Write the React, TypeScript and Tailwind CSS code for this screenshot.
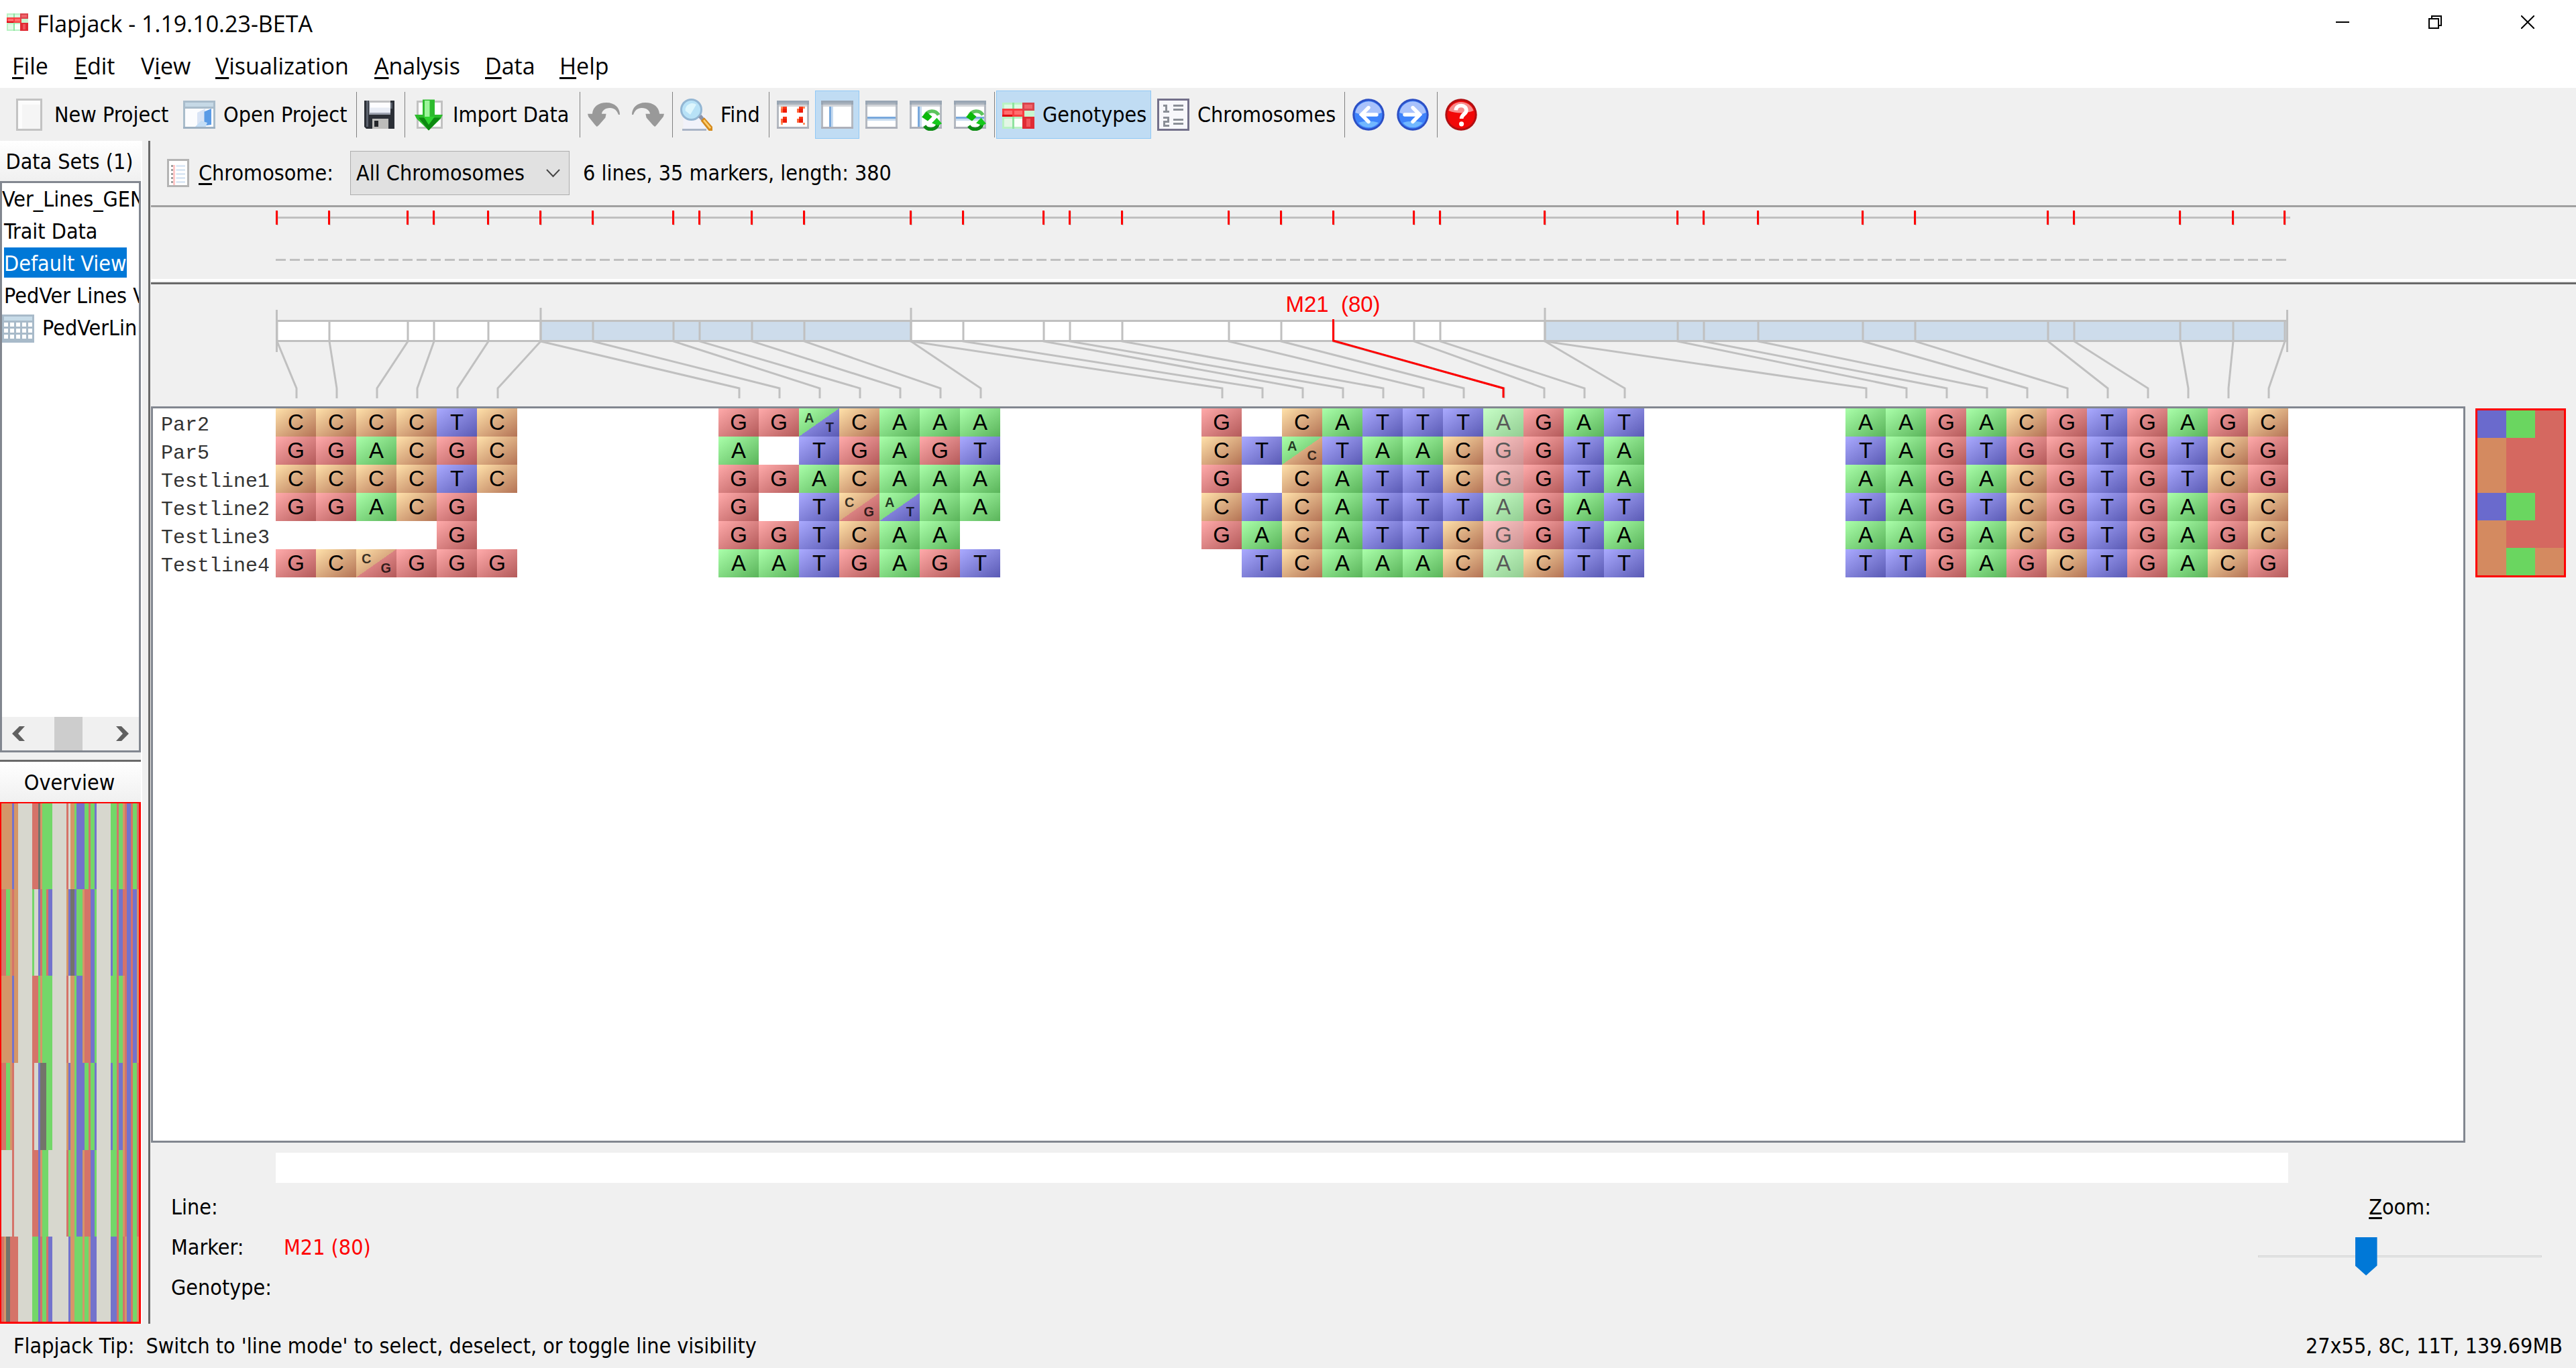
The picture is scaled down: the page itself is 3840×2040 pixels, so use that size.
/**
 * Flapjack main window: toolbar, data set tree, chromosome maps and the
 * genotype matrix.
 */
import { useState } from 'react'

// '-' is missing data, two letters are a heterozygous call
const CHROMOSOMES = [
  {
    ticks: [412, 490, 607, 646, 727, 805],
    rows: ['C C C C T C', 'G G A C G C', 'C C C C T C', 'G G A C G -', '- - - - G -', 'G C CG G G G'],
  },
  {
    ticks: [805, 883, 1003, 1042, 1120, 1198, 1357],
    rows: [
      'G G AT C A A A',
      'A - T G A G T',
      'G G A C A A A',
      'G - T CG AT A A',
      'G G T C A A -',
      'A A T G A G T',
    ],
  },
  {
    ticks: [1357, 1435, 1555, 1594, 1672, 1831, 1909, 1987, 2107, 2146, 2302],
    rows: [
      'G - C A T T T A G A T',
      'C T AC T A A C G G T A',
      'G - C A T T C G G T A',
      'C T C A T T T A G A T',
      'G A C A T T C G G T A',
      '- T C A A A C A C T T',
    ],
  },
  {
    ticks: [2302, 2500, 2539, 2620, 2776, 2854, 3052, 3091, 3249, 3328, 3405],
    rows: [
      'A A G A C G T G A G C',
      'T A G T G G T G T C G',
      'A A G A C G T G T C G',
      'T A G T C G T G A G C',
      'A A G A C G T G A G C',
      'T T G A G C T G A C G',
    ],
  },
]

const LINES = ['Par2', 'Par5', 'Testline1', 'Testline2', 'Testline3', 'Testline4']
const MAP_X = 411
const CELL = 60
const SELECTED = { chromosome: 2, marker: 7 }
const MAP_W = 3000

// first column of each chromosome in the matrix
const STARTS = [0, 11, 23, 39]

const CELL_BG: Record<string, string> = {
  A: 'bg-linear-to-br/srgb from-[#aaffaa] to-[#5ab45a]',
  C: 'bg-linear-to-br/srgb from-[#ffe1aa] to-[#b47355]',
  G: 'bg-linear-to-br/srgb from-[#ffaaaa] to-[#b45a5a]',
  T: 'bg-linear-to-br/srgb from-[#aaaaff] to-[#5a5ab4]',
  AT: 'bg-[linear-gradient(to_bottom_right,#aaffaa,#82da82_50%,#8282da_50%,#5a5ab4)]',
  CG: 'bg-[linear-gradient(to_bottom_right,#ffe1aa,#daaa80_50%,#da8282_50%,#b45a5a)]',
  AC: 'bg-[linear-gradient(to_bottom_right,#aaffaa,#82da82_50%,#daaa80_50%,#b47355)]',
}

const OVERVIEW_FILL: Record<string, string> = { A: '#73d769', C: '#d59668', G: '#d57369', T: '#7373cc' }
const MINI_BG: Record<string, string> = { A: 'bg-[#6ad660]', C: 'bg-[#d48a60]', G: 'bg-[#d56860]', T: 'bg-[#6a6acd]' }
const MINI_ROWS = ['TAG', 'CGG', 'CGG', 'TAG', 'CGG', 'CAC']

function Mnemonic({ text, at = 0 }: { text: string; at?: number }) {
  return (
    <span>
      {text.slice(0, at)}
      <u className="decoration-[3px] underline-offset-4 [text-decoration-skip-ink:none]">{text[at]}</u>
      {text.slice(at + 1)}
    </span>
  )
}

/* ---------- icons, all drawn on a 16 unit grid ---------- */

function Icon({ children }: { children: React.ReactNode }) {
  return (
    <svg viewBox="0 0 16 16" className="size-12 shrink-0" aria-hidden="true">
      {children}
    </svg>
  )
}

function FlapjackTiles() {
  return (
    <>
      <rect x="0" y="2" width="16" height="13" fill="#b9f2c4" />
      <rect x="1" y="3" width="4" height="2" fill="#dcfae2" />
      <rect x="6" y="3" width="4" height="2" fill="#dcfae2" />
      <rect x="5" y="2" width="1" height="13" fill="#8fe3a0" />
      <rect x="1" y="10" width="4" height="4" fill="#e3f7e5" />
      <rect x="6" y="10" width="4" height="4" fill="#fafffa" />
      <rect x="0" y="5" width="11" height="4" fill="#f83c40" />
      <rect x="1" y="6" width="4" height="2" fill="#ff6e6e" />
      <rect x="6" y="6" width="4" height="2" fill="#ff6e6e" />
      <rect x="0" y="8" width="5" height="1" fill="#e00010" />
      <rect x="10" y="2" width="6" height="4" fill="#d9434c" />
      <rect x="11" y="3" width="4" height="2" fill="#f0646a" />
      <rect x="11" y="6" width="5" height="3" fill="#c8f5d0" />
      <rect x="10" y="9" width="6" height="6" fill="#e02a34" />
      <rect x="12" y="10" width="2" height="4" fill="#f0545a" />
    </>
  )
}

function WindowFrame() {
  return (
    <>
      <rect x="0" y="1" width="16" height="14" fill="#b4b9c1" />
      <rect x="0" y="1" width="16" height="2" fill="#98a5b3" />
      <rect x="1" y="2" width="14" height="1" fill="#a9b2bc" />
      <rect x="1" y="3" width="14" height="1" fill="#d3d5d9" />
      <rect x="1" y="4" width="14" height="10" fill="#fff" />
      <rect x="0" y="14" width="16" height="1" fill="#adb0ba" />
    </>
  )
}

function RefreshArrows() {
  return (
    <>
      <path d="M7.6 8.6A3.8 3.8 0 0 1 14.4 8.2" fill="none" stroke="#5cc45c" strokeWidth="1.7" />
      <path d="M6 9.2L8.4 6.6L11.2 9L9 11.2Z" fill="#0ab80a" />
      <path d="M14.2 12.4A3.8 3.8 0 0 1 7.4 13.6" fill="none" stroke="#0c8a14" strokeWidth="1.7" />
      <path d="M11 12.2L13.5 9.6L16 12.4L14 13.4Z" fill="#16c81c" />
    </>
  )
}

function NewIcon() {
  return (
    <Icon>
      <rect x="1.5" y="0.5" width="12" height="15" fill="#fcfcfc" stroke="#c3c3c3" />
      <rect x="4" y="3" width="9" height="12" fill="#f5f5f5" />
    </Icon>
  )
}

function OpenIcon() {
  return (
    <Icon>
      <rect x="0" y="1" width="16" height="14" fill="#a9bccb" />
      <rect x="1" y="2" width="14" height="2" fill="#c6d9e6" />
      <rect x="1" y="5" width="14" height="9" fill="#fbfcfe" />
      <path d="M7 14V7L11 5V14Z" fill="#d9e4f5" />
      <path d="M10.5 13.5V6.5L14 5V13Z" fill="#5a9be6" />
      <path d="M6 14L9 11L12 12L11 14.5Z" fill="#c4ddf5" />
      <rect x="0" y="14" width="16" height="1" fill="#9db0c2" />
    </Icon>
  )
}

function SaveIcon() {
  return (
    <Icon>
      <path d="M0 1H15V15H1L0 14Z" fill="#2b2f36" />
      <rect x="1" y="1" width="1" height="13" fill="#5b626d" />
      <rect x="2.5" y="1" width="10.5" height="7" fill="#e8ecf5" />
      <rect x="2.5" y="1" width="10.5" height="1" fill="#bfc0c2" />
      <rect x="3" y="2" width="10" height="2.5" fill="#fdfdff" />
      <rect x="2.5" y="7" width="10.5" height="1" fill="#9da3b0" />
      <rect x="4" y="10" width="8" height="5" fill="#bcbcba" />
      <rect x="5" y="11" width="2" height="3" fill="#24262a" />
      <rect x="13" y="2" width="1" height="3" fill="#5b626d" />
    </Icon>
  )
}

function ImportIcon() {
  return (
    <Icon>
      <rect x="2.5" y="1.5" width="12" height="13" fill="#fff" stroke="#c2c2c2" />
      <path d="M5 0.5H11V8H15L14 10L8 15.8L2 10L1 8H5Z" fill="#2dbb2d" />
      <path d="M6 1H8.5V9H6Z" fill="#9cf59a" />
      <path d="M3 9.5H14L8 15.8Z" fill="#0d8a10" />
      <path d="M5.5 9H11L8 13Z" fill="#2fd42f" />
    </Icon>
  )
}

function UndoIcon({ flip = false }: { flip?: boolean }) {
  return (
    <Icon>
      <path
        transform={flip ? 'translate(16 0) scale(-1 1)' : undefined}
        d="M2.3 7.6C2.6 4 5.5 2 9.3 2C13.5 2 16 4.6 16 8H15.3C14.6 5.8 13 4.6 11 4.7C8.6 4.8 7.2 6 7 7.6H9.2L8.8 9.5L5.6 13.2L4.6 14L3.6 13L0.4 9L0 7.6Z"
        fill="#999"
      />
    </Icon>
  )
}

function FindIcon() {
  return (
    <Icon>
      <path d="M1.5 8V15.5H13V8Z" fill="#f1f2fa" />
      <rect x="1" y="15" width="12" height="1" fill="#a9b4c6" />
      <circle cx="5.5" cy="5.5" r="5" fill="#b8e2f7" stroke="#93b6d3" />
      <path d="M2.5 6A3.5 3.5 0 0 1 8 3L5 8Z" fill="#ddf6fd" />
      <path d="M9 9.3L10.5 8L12 9.8L10.5 11Z" fill="#8d93a6" />
      <path d="M10.2 11L12 9.4L16 14V16H14.2Z" fill="#d58a1c" />
      <path d="M11.3 11L12 10.4L15.4 14.5L14.6 15Z" fill="#ffcf70" />
    </Icon>
  )
}

function ZoomOutIcon() {
  return (
    <Icon>
      <WindowFrame />
      {[
        [3, 5, 2, 4],
        [11, 5, 13, 4],
        [3, 10, 2, 12],
        [11, 10, 13, 12],
      ].map(([x, y, dx, dy]) => (
        <g key={`${x}-${y}`}>
          <rect x={dx} y={dy} width="1" height="1" fill="#ff9060" />
          <rect x={x - 1} y={y} width="3" height="2" fill="#ff6a3c" />
          <rect x={x} y={y - 1} width="2" height="3" fill="#fa3818" />
          <rect x={x} y={y} width="2" height="2" fill="#ee1c08" />
        </g>
      ))}
    </Icon>
  )
}

function ColumnIcon({ refresh = false }: { refresh?: boolean }) {
  return (
    <Icon>
      <WindowFrame />
      <rect x="4" y="4" width="1" height="10" fill="#78a8dc" />
      <rect x="5" y="4" width="1" height="10" fill="#c8dcf0" />
      {refresh && <RefreshArrows />}
    </Icon>
  )
}

function RowIcon({ refresh = false }: { refresh?: boolean }) {
  return (
    <Icon>
      <WindowFrame />
      <rect x="1" y="9" width="14" height="1" fill="#78a8dc" />
      <rect x="1" y="10" width="14" height="1" fill="#c8dcf0" />
      {refresh && <RefreshArrows />}
    </Icon>
  )
}

function ChromosomesIcon() {
  return (
    <Icon>
      <rect x="0.5" y="0.5" width="15" height="15" fill="#f7f7fb" stroke="#73708a" />
      <path d="M3 3H5V6H6V7H3V6H4V4H3Z" fill="#8b8f97" />
      <path d="M3 9H6V12H4V13H6V14H3V11H5V10H3Z" fill="#8b8f97" />
      <path d="M8 3.5H13M8 5.5H13M8 10.5H13M8 12.5H13" stroke="#8b8f97" />
    </Icon>
  )
}

function NavIcon({ back = false }: { back?: boolean }) {
  return (
    <Icon>
      <circle cx="8" cy="8" r="7.9" fill="#2c4fc4" />
      <circle cx="8" cy="8" r="6.9" fill="#3f83fb" />
      <path d="M1.4 7A6.7 6.7 0 0 1 14.6 7C11 8.5 5 8.5 1.4 7Z" fill="#a9c2fb" />
      <path d="M3 12A6.5 6.5 0 0 0 13 12C10 11 6 11 3 12Z" fill="#72b8ff" />
      <path
        transform={back ? 'translate(16 0) scale(-1 1)' : undefined}
        d="M4 8H11M8 4.5L11.5 8L8 11.5"
        fill="none"
        stroke="#fff"
        strokeWidth="1.8"
        strokeLinecap="round"
      />
    </Icon>
  )
}

function HelpIcon() {
  return (
    <Icon>
      <circle cx="8" cy="8" r="7.9" fill="#b00f12" />
      <circle cx="8" cy="8" r="6.9" fill="#f20808" />
      <path d="M1.8 6A6.6 6.6 0 0 1 14.2 6C11 7.5 5 7.5 1.8 6Z" fill="#f78c8c" />
      <path d="M5.4 5.8C5.6 2.6 10.8 2.8 10.6 6C10.5 7.8 8.2 7.8 8.2 10" fill="none" stroke="#fff" strokeWidth="1.9" />
      <circle cx="8.2" cy="12.6" r="1.2" fill="#fff" />
    </Icon>
  )
}

/* ---------- toolbar ---------- */

function ToolButton({
  label,
  name,
  width = 'w-[66px]',
  active = false,
  children,
}: {
  label?: string
  name?: string
  width?: string
  active?: boolean
  children: React.ReactNode
}) {
  return (
    <button
      type="button"
      aria-label={label ?? name}
      aria-pressed={active}
      className={`${width} flex h-[72px] shrink-0 items-center gap-3 border px-2 whitespace-nowrap ${
        active ? 'border-[#90c8f6] bg-[#c0dcf3]' : 'border-transparent'
      }`}
    >
      {children}
      {label && <span>{label}</span>}
    </button>
  )
}

function Separator() {
  return <div className="mx-[2px] h-[68px] w-[2px] shrink-0 border-r border-[#808080]" />
}

function Toolbar() {
  return (
    <div className="flex h-[79px] items-center bg-[#f0f0f0] pl-3" role="toolbar">
      <ToolButton label="New Project" width="w-[252px]"><NewIcon /></ToolButton>
      <ToolButton label="Open Project" width="w-[264px]"><OpenIcon /></ToolButton>
      <Separator />
      <ToolButton name="Save"><SaveIcon /></ToolButton>
      <Separator />
      <ToolButton label="Import Data" width="w-[255px]"><ImportIcon /></ToolButton>
      <Separator />
      <ToolButton name="Undo"><UndoIcon /></ToolButton>
      <ToolButton name="Redo"><UndoIcon flip /></ToolButton>
      <Separator />
      <ToolButton label="Find" width="w-[138px]"><FindIcon /></ToolButton>
      <Separator />
      <ToolButton name="Reset zoom"><ZoomOutIcon /></ToolButton>
      <ToolButton name="Marker mode" active><ColumnIcon /></ToolButton>
      <ToolButton name="Line mode"><RowIcon /></ToolButton>
      <ToolButton name="Invert markers"><ColumnIcon refresh /></ToolButton>
      <ToolButton name="Invert lines"><RowIcon refresh /></ToolButton>
      <Separator />
      <ToolButton label="Genotypes" width="w-[231px]" active><Icon><FlapjackTiles /></Icon></ToolButton>
      <ToolButton label="Chromosomes" width="w-[285px]"><ChromosomesIcon /></ToolButton>
      <Separator />
      <ToolButton name="Previous"><NavIcon back /></ToolButton>
      <ToolButton name="Next"><NavIcon /></ToolButton>
      <Separator />
      <ToolButton name="Help"><HelpIcon /></ToolButton>
    </div>
  )
}

function TitleBar() {
  return (
    <header className="flex h-[66px] items-center bg-white pl-[10px] font-['Open_Sans','Noto_Sans',sans-serif] text-[34px]">
      <svg viewBox="0 2 16 13" className="h-[26px] w-8" aria-hidden="true">
        <FlapjackTiles />
      </svg>
      <h1 className="ml-[13px] flex-1 pt-1">Flapjack - 1.19.10.23-BETA</h1>
      <div className="flex pr-[3px]">
        <button type="button" aria-label="Minimize" className="flex h-16 w-[138px] items-center justify-center">
          <svg width="20" height="20" aria-hidden="true"><path d="M0 10H20" stroke="#000" strokeWidth="2" /></svg>
        </button>
        <button type="button" aria-label="Restore" className="flex h-16 w-[138px] items-center justify-center">
          <svg width="20" height="20" fill="none" stroke="#000" strokeWidth="2" aria-hidden="true">
            <path d="M1 5H15V19H1ZM5 5V1H19V15H15" />
          </svg>
        </button>
        <button type="button" aria-label="Close" className="flex h-16 w-[138px] items-center justify-center">
          <svg width="20" height="20" aria-hidden="true"><path d="M0 0L20 20M20 0L0 20" stroke="#000" strokeWidth="2" /></svg>
        </button>
      </div>
    </header>
  )
}

function MenuBar() {
  const items = [
    { text: 'File', width: 'w-[93px]' },
    { text: 'Edit', width: 'w-[99px]' },
    { text: 'View', at: 1, width: 'w-[111px]' },
    { text: 'Visualization', width: 'w-[237px]' },
    { text: 'Analysis', width: 'w-[165px]' },
    { text: 'Data', width: 'w-[111px]' },
    { text: 'Help', width: 'w-[111px]' },
  ]
  return (
    <nav className="flex h-[65px] items-center bg-white pl-[18px] font-['Open_Sans','Noto_Sans',sans-serif] text-[34px]">
      {items.map((item) => (
        <button key={item.text} type="button" className={`${item.width} shrink-0 text-left whitespace-nowrap`}>
          <Mnemonic text={item.text} at={item.at} />
        </button>
      ))}
    </nav>
  )
}

/* ---------- left side ---------- */

function PanelHeading({ children }: { children: React.ReactNode }) {
  return (
    <h2 className="h-[60px] shrink-0 bg-linear-to-b from-white to-[#f0f0f0] pr-[3px] text-center leading-[62px] whitespace-nowrap">
      {children}
    </h2>
  )
}

function DataTree() {
  return (
    <div className="flex min-h-0 flex-1 flex-col overflow-hidden border-3 border-[#828790] bg-white">
      <ul className="flex-1 leading-12 whitespace-nowrap">
        <li className="h-12">Ver_Lines_GEN</li>
        <li className="h-12 pl-[3px]">Trait Data</li>
        <li className="h-12 pl-[3px]">
          <span className="inline-block h-[45px] bg-[#0078d7] text-white">Default View</span>
        </li>
        <li className="h-12 pl-[3px]">PedVer Lines V</li>
        <li className="flex h-12 gap-3">
          <svg viewBox="0 0 16 14" className="mt-1 h-[42px] w-12 shrink-0" aria-hidden="true">
            <rect width="16" height="14" fill="#a8bac9" />
            <rect x="1" y="1" width="14" height="2" fill="#c7dbe8" />
            <path d="M1 5H15M1 8H15M1 11H15" stroke="#fff" strokeWidth="2" strokeDasharray="2 1" />
          </svg>
          <span>PedVerLin</span>
        </li>
      </ul>
      <div className="flex h-[50px] shrink-0 items-center justify-between bg-[#f0f0f0] px-[15px]">
        <button type="button" aria-label="Scroll left">
          <svg width="19" height="22" aria-hidden="true"><path d="M0 11L11 0H19L9 11L19 22H11Z" fill="#606060" /></svg>
        </button>
        <div className="mr-[6px] h-full w-[42px] bg-[#cdcdcd]" />
        <button type="button" aria-label="Scroll right">
          <svg width="19" height="22" aria-hidden="true"><path d="M19 11L8 0H0L10 11L0 22H8Z" fill="#606060" /></svg>
        </button>
      </div>
    </div>
  )
}

function OverviewPlot() {
  // 50 matrix columns snapped to 70 blocks of 3px
  const edge = (col: number) => Math.ceil(col * 1.4)
  return (
    <div className="relative min-h-0 flex-1">
      <svg
        viewBox="0 0 70 6"
        preserveAspectRatio="none"
        shapeRendering="crispEdges"
        className="block h-full w-full"
        role="img"
        aria-label="Overview"
      >
        <rect width="70" height="6" fill="#d7d7ce" />
        {CHROMOSOMES.map((chr, c) =>
          chr.rows.map((row, y) =>
            row.split(' ').map((call, i) => {
              if (call === '-') return null
              const x = edge(STARTS[c] + i)
              return (
                <rect
                  key={`${c}-${y}-${i}`}
                  x={x}
                  y={y}
                  width={edge(STARTS[c] + i + 1) - x}
                  height="1"
                  fill={OVERVIEW_FILL[call] ?? '#73736a'}
                />
              )
            }),
          ),
        )}
      </svg>
      {/* visible region */}
      <div className="absolute inset-0 border-2 border-r-3 border-b-3 border-[#ff0000]" />
    </div>
  )
}

/* ---------- chromosome maps ---------- */

function GenomeStrip() {
  return (
    <div className="h-[118px] shrink-0 border-t-3 border-b-3 border-t-[#a0a0a0] border-b-[#696969] pl-[186px]">
      <svg className="block h-full w-[3003px] overflow-visible" aria-hidden="true">
        <path d={`M0 15.5H${MAP_W + 3}`} stroke="#c0c0c0" strokeWidth="3" />
        <path d={`M0 78.5H${MAP_W}`} stroke="#c0c0c0" strokeWidth="3" strokeDasharray="15 6" />
        {CHROMOSOMES.flatMap((c) => c.ticks).map((t, i) => (
          <g key={i}>
            <path d={`M${t - MAP_X + 1.5} 6V27`} stroke="#c0c0c0" strokeWidth="2" />
            <path d={`M${t - MAP_X + 0.5} 5V26`} stroke="#f00" strokeWidth="3" />
          </g>
        ))}
      </svg>
      <div className="-mt-[5px] -ml-[186px] h-[3px] bg-white" />
    </div>
  )
}

function ChromosomeMap() {
  const sel = CHROMOSOMES[SELECTED.chromosome].ticks[SELECTED.marker] - MAP_X
  const center = (c: number, i: number) => (STARTS[c] + i) * CELL + CELL / 2 + 1
  return (
    <div className="h-[182px] shrink-0 pl-[186px]">
      <svg className="block h-full w-[3003px] overflow-visible" role="img" aria-label="Marker map">
        <rect x="0" y="54" width={MAP_W} height="31" fill="#fff" />
        {CHROMOSOMES.map((chr, c) =>
          c % 2 === 1 ? (
            <rect
              key={c}
              x={chr.ticks[0] - MAP_X}
              y="54"
              width={(CHROMOSOMES[c + 1]?.ticks[0] ?? 3409) - chr.ticks[0]}
              height="31"
              fill="#cddceb"
            />
          ) : null,
        )}
        <path d="M0 54.5H2998M0 84.5H2998" stroke="#c0c0c0" strokeWidth="3" />
        {CHROMOSOMES.map((chr, c) =>
          chr.ticks.map((t, i) => {
            const x = t - MAP_X + 1
            const end = center(c, i)
            return (
              <path
                key={`${c}-${i}`}
                d={`M${x} ${i === 0 && c > 0 ? 35 : 54}V85L${end} 155V170`}
                fill="none"
                stroke="#c0c0c0"
                strokeWidth="3"
              />
            )
          }),
        )}
        <path d="M1.5 38V101M2998.5 38V101" stroke="#c0c0c0" strokeWidth="3" />
        <path
          d={`M${sel + 0.5} 52V84L${center(SELECTED.chromosome, SELECTED.marker) - 1} 155V169`}
          fill="none"
          stroke="#f00"
          strokeWidth="3"
        />
        <text
          x={sel}
          y="41"
          textAnchor="middle"
          fill="#f00"
          className="font-['Liberation_Sans',Arial,sans-serif] text-[33px] whitespace-pre"
        >
          {'M21  (80)'}
        </text>
      </svg>
    </div>
  )
}

/* ---------- genotype matrix ---------- */

function GenotypeCell({ call, faded }: { call: string; faded: boolean }) {
  if (call === '-') return <td />
  if (call.length === 2) {
    return (
      <td className={CELL_BG[call]}>
        <div className="flex h-[42px] justify-between px-[8px] text-[20px] leading-[28px] font-bold text-black/75">
          <span>{call[0]}</span>
          <span className="self-end">{call[1]}</span>
        </div>
      </td>
    )
  }
  return <td className={`${CELL_BG[call]} ${faded ? 'opacity-65' : ''}`}>{call}</td>
}

function GenotypeTable() {
  return (
    <table className="w-[3183px] table-fixed border-collapse text-center font-['Liberation_Sans',Arial,sans-serif] text-[33px] leading-[42px]">
      <colgroup>
        <col className="w-[183px]" />
        {CHROMOSOMES.flatMap((chr, c) => [
          ...(c > 0 ? [<col key={`gap-${c}`} className="w-[300px]" />] : []),
          ...chr.ticks.map((_, i) => <col key={`${c}-${i}`} className="w-[60px]" />),
        ])}
      </colgroup>
      <tbody>
        {LINES.map((line, y) => (
          <tr key={line} className="h-[42px]">
            <th
              scope="row"
              className="p-0 pt-2 pl-3 text-left font-['Liberation_Mono','Courier_New',monospace] text-[30px] leading-[34px] font-normal text-[#333]"
            >
              {line}
            </th>
            {CHROMOSOMES.flatMap((chr, c) => [
              ...(c > 0 ? [<td key={`gap-${c}`} />] : []),
              ...chr.rows[y].split(' ').map((call, i) => (
                <GenotypeCell
                  key={`${c}-${i}`}
                  call={call}
                  faded={c === SELECTED.chromosome && i === SELECTED.marker}
                />
              )),
            ])}
          </tr>
        ))}
      </tbody>
    </table>
  )
}

function TraitHeatmap() {
  return (
    <div className="grid h-[252px] w-[135px] grid-cols-3 border-3 border-[#ff0000]">
      {MINI_ROWS.flatMap((row, y) => [...row].map((v, x) => <div key={`${y}-${x}`} className={MINI_BG[v]} />))}
    </div>
  )
}

function ZoomSlider() {
  const [zoom, setZoom] = useState(37)
  return (
    <div className="flex w-[423px] flex-col items-center">
      <label htmlFor="zoom" className="leading-[60px]">
        <Mnemonic text="Zoom:" />
      </label>
      <input
        id="zoom"
        type="range"
        value={zoom}
        onChange={(e) => setZoom(Number(e.target.value))}
        className="mt-[15px] h-[57px] w-full appearance-none bg-transparent [&::-webkit-slider-runnable-track]:h-[3px] [&::-webkit-slider-runnable-track]:border [&::-webkit-slider-runnable-track]:border-[#d6d6d6] [&::-webkit-slider-runnable-track]:bg-[#e7eaea] [&::-webkit-slider-thumb]:mt-[-28px] [&::-webkit-slider-thumb]:h-[57px] [&::-webkit-slider-thumb]:w-[33px] [&::-webkit-slider-thumb]:appearance-none [&::-webkit-slider-thumb]:bg-[#0078d7] [&::-webkit-slider-thumb]:[clip-path:polygon(0_0,100%_0,100%_74%,50%_100%,0_74%)]"
      />
    </div>
  )
}

function ChromosomeBar() {
  return (
    <div className="flex h-24 shrink-0 items-center pl-6">
      <svg viewBox="0 0 11 14" className="h-[42px] w-[33px]" aria-hidden="true">
        <rect x="0.5" y="0.5" width="10" height="13" fill="#fff" stroke="#b4b4b4" />
        <path d="M2.5 3V13" stroke="#a0a0a0" strokeDasharray="1 1" />
        <path d="M3.5 3V13" stroke="#ffc8c8" />
        <path d="M4.5 3.5H9M4.5 5.5H9M4.5 7.5H9M4.5 9.5H9M4.5 11.5H9" stroke="#dce8f5" />
      </svg>
      <label htmlFor="chromosome" className="ml-[14px] w-[226px] whitespace-nowrap">
        <Mnemonic text="Chromosome:" />
      </label>
      <div className="relative">
        <select
          id="chromosome"
          className="block h-[66px] w-[327px] appearance-none border border-[#adadad] bg-[#e1e1e1] pl-2"
        >
          <option>All Chromosomes</option>
        </select>
        <svg width="21" height="13" className="pointer-events-none absolute top-[27px] right-[14px]" aria-hidden="true">
          <path d="M1 1L10.5 11L20 1" fill="none" stroke="#444" strokeWidth="2" />
        </svg>
      </div>
      <span className="ml-[20px] whitespace-nowrap">6 lines, 35 markers, length: 380</span>
    </div>
  )
}

export default function App() {
  return (
    <div className="flex h-screen flex-col overflow-hidden bg-[#f0f0f0] font-['DejaVu_Sans_Condensed','Noto_Sans',sans-serif] text-[32px] text-black">
      <TitleBar />
      <MenuBar />
      <Toolbar />

      <div className="flex min-h-0 flex-1">
        <aside className="flex w-[210px] shrink-0 flex-col">
          <PanelHeading>Data Sets (1)</PanelHeading>
          <DataTree />
          <div className="h-[14px] shrink-0 border-b-3 border-[#696969]" />
          <section className="flex h-[838px] shrink-0 flex-col">
            <PanelHeading>Overview</PanelHeading>
            <OverviewPlot />
          </section>
        </aside>
        <div className="w-[15px] shrink-0 border-l-2 border-l-white">
          <div className="ml-[9px] h-full w-[3px] bg-[#696969]" />
        </div>

        <main className="flex min-w-0 flex-1 flex-col">
          <ChromosomeBar />
          <GenomeStrip />
          <ChromosomeMap />
          <div className="flex min-h-0 flex-1">
            <div className="min-w-0 flex-1 overflow-hidden border-3 border-[#828790] bg-white">
              <GenotypeTable />
            </div>
            <div className="shrink-0 px-[15px] pt-[3px]">
              <TraitHeatmap />
            </div>
          </div>
          <div className="mt-[15px] mb-[6px] ml-[186px] h-[45px] w-[3000px] shrink-0 bg-white" />
          <div className="flex h-[204px] shrink-0 items-start justify-between pr-[51px] pl-[30px]">
            <dl className="grid grid-cols-[168px_auto] leading-[60px]">
              <dt>Line:</dt>
              <dd />
              <dt>Marker:</dt>
              <dd className="text-[#ff0000]">M21 (80)</dd>
              <dt>Genotype:</dt>
              <dd />
            </dl>
            <ZoomSlider />
          </div>
        </main>
      </div>

      <footer className="flex h-[66px] shrink-0 items-center justify-between px-[20px] whitespace-nowrap">
        <span>
          Flapjack Tip: <span className="ml-2">Switch to 'line mode' to select, deselect, or toggle line visibility</span>
        </span>
        <span>27x55, 8C, 11T, 139.69MB</span>
      </footer>
    </div>
  )
}
